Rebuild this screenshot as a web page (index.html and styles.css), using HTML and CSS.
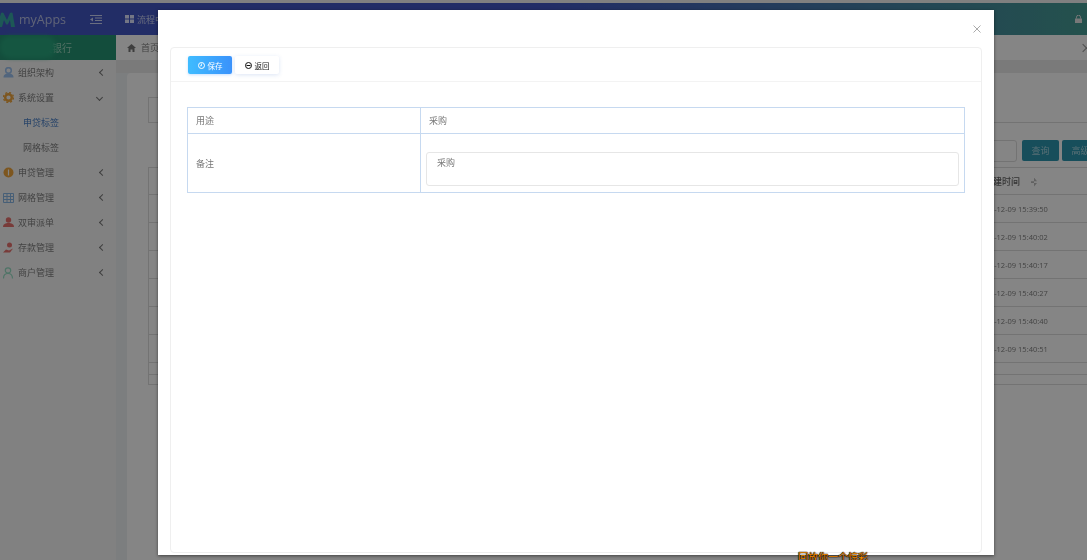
FILE: index.html
```html
<!DOCTYPE html>
<html lang="zh-CN">
<head>
  <meta charset="UTF-8" />
  <title>myApps</title>
  <link rel="stylesheet" href="styles.css">
</head>
<body>
  <div class="app">
    <!-- Top bar -->
    <header class="topbar">
      <div class="brand">
        <svg class="logo" width="16" height="15" viewBox="0 0 16 15"><path d="M-3 15 L1 1 Q2 0 3.500 1 L7 8 L10 1 Q11.500 0 12.500 1 L15 15 L11 15 L10 8 L8 12 Q7 13 6 12 L4 8 L2 15 Z" fill="#38aaa6"/></svg>
        <span class="brand-name">myApps</span>
        <svg class="menu-icon" width="12" height="9" viewBox="0 0 12 9"><path d="M0 .5h12M5 3h7M5 5.500h7M0 8.500h12" stroke="#ccd4f5" fill="none"/><path d="M3 2.500L0 4.500l3 2z" fill="#ccd4f5"/></svg>
      </div>
      <div class="topnav">
        <svg width="9" height="8" viewBox="0 0 9 8"><path d="M0 0h4v3.500H0zM5 0h4v3.500H5zM0 4.500h4V8H0zM5 4.500h4V8H5z" fill="#dfe5ff"/></svg>
        <span>流程中心</span>
      </div>
      <svg class="lock" width="7" height="8" viewBox="0 0 7 8"><path d="M1.500 3.500V2.200a2 2 0 0 1 4 0v1.300" stroke="#e6e6e6" fill="none"/><rect y="3.500" width="7" height="4.500" fill="#e6e6e6"/></svg>
    </header>

    <div class="main">
      <!-- Sidebar -->
      <aside class="sidebar">
        <div class="bank">
          <span class="bank-name">某某银行</span>
          <span class="bank-blur"></span>
        </div>
        <ul class="menu">
          <li class="menu-item">
            <svg width="11" height="11" viewBox="0 0 11 11"><circle cx="5.500" cy="3.500" r="2.800" fill="none" stroke="#86b4ee" stroke-width="1.500"/><path d="M.5 10.500c0-3 2-4 5-4s5 1 5 4z" fill="#86b4ee"/></svg>
            <span>组织架构</span><i class="chev"></i>
          </li>
          <li class="menu-item">
            <svg width="11" height="11" viewBox="0 0 11 11"><circle cx="5.500" cy="5.500" r="3.300" fill="none" stroke="#ee920f" stroke-width="2.400"/><circle cx="5.500" cy="5.500" r="5" fill="none" stroke="#ee920f" stroke-width="1.400" stroke-dasharray="2 1.930"/></svg>
            <span>系统设置</span><i class="chev open"></i>
          </li>
          <li class="sub-item active">申贷标签</li>
          <li class="sub-item">网格标签</li>
          <li class="menu-item">
            <svg width="11" height="11" viewBox="0 0 11 11"><circle cx="5.500" cy="5.500" r="5" fill="#ee920f"/><path d="M5.500 2.500v6" stroke="#fff" stroke-width="1.200"/></svg>
            <span>申贷管理</span><i class="chev"></i>
          </li>
          <li class="menu-item">
            <svg width="11" height="10" viewBox="0 0 11 10"><path d="M.5.500h10v9H.5zM.5 3.500h10M.5 6.500h10M4 .5v9M7.500.5v9" fill="none" stroke="#6ea6e0"/></svg>
            <span>网格管理</span><i class="chev"></i>
          </li>
          <li class="menu-item">
            <svg width="11" height="11" viewBox="0 0 11 11"><circle cx="5.500" cy="3" r="2.700" fill="#e4504c"/><path d="M0 10c0-3 2.500-4 5.500-4S11 7 11 10z" fill="#e4504c"/></svg>
            <span>双审派单</span><i class="chev"></i>
          </li>
          <li class="menu-item">
            <svg width="11" height="11" viewBox="0 0 11 11"><circle cx="6.500" cy="3" r="2.500" fill="#e4504c"/><path d="M0 10.500l3-3 3 1 4-2-3 4z" fill="#e4504c"/></svg>
            <span>存款管理</span><i class="chev"></i>
          </li>
          <li class="menu-item">
            <svg width="11" height="12" viewBox="0 0 11 12"><circle cx="5" cy="3.500" r="2.700" fill="none" stroke="#7fd8b8" stroke-width="1.200"/><path d="M.5 11.500c0-3.500 2-5 4.500-5s4.500 1.500 4.500 5" fill="none" stroke="#7fd8b8" stroke-width="1.200"/></svg>
            <span>商户管理</span><i class="chev"></i>
          </li>
        </ul>
      </aside>

      <!-- Main content behind the dialog -->
      <main class="content">
        <div class="tabs">
          <svg width="9" height="8" viewBox="0 0 9 8"><path d="M4.500 0L9 4H7.500v4H5.500V5.500h-2V8H1.500V4H0z" fill="#777"/></svg>
          <span>首页</span>
          <i class="tabs-next"></i>
        </div>
        <div class="band"></div>
        <div class="card">
          <div class="tab-line"><div class="tab-box"></div></div>
          <div class="search">
            <div class="search-input"></div>
            <button class="btn">查询</button>
            <button class="btn">高级</button>
          </div>
          <div class="grid">
            <div class="row head"><div class="time">创建时间<span class="sort"></span></div></div>
            <div class="row"><div class="time">2020-12-09 15:39:50</div></div>
            <div class="row"><div class="time">2020-12-09 15:40:02</div></div>
            <div class="row"><div class="time">2020-12-09 15:40:17</div></div>
            <div class="row"><div class="time">2020-12-09 15:40:27</div></div>
            <div class="row"><div class="time">2020-12-09 15:40:40</div></div>
            <div class="row"><div class="time">2020-12-09 15:40:51</div></div>
            <div class="row thin"></div>
            <div class="row last"></div>
          </div>
        </div>
      </main>
    </div>
  </div>

  <div class="overlay"></div>

  <!-- Dialog -->
  <div class="modal">
    <div class="modal-close">
      <svg width="8" height="8" viewBox="0 0 8 8"><path d="M.5.500l7 7M7.500.5l-7 7" stroke="#aaa" fill="none"/></svg>
    </div>
    <div class="panel">
      <div class="toolbar">
        <button class="tool save">
          <svg width="7" height="7" viewBox="0 0 7 7"><circle cx="3.500" cy="3.500" r="3" fill="none" stroke="#fff"/><path d="M3.500 1.500v2.300H2" fill="none" stroke="#fff" stroke-width=".8"/></svg>
          保存
        </button>
        <button class="tool back">
          <svg width="7" height="7" viewBox="0 0 7 7"><circle cx="3.500" cy="3.500" r="3" fill="none" stroke="#111"/><path d="M1.500 3.500h4" stroke="#111"/></svg>
          返回
        </button>
      </div>
      <table class="form-table">
        <tr class="row-use">
          <td class="label">用途</td>
          <td class="value">采购</td>
        </tr>
        <tr class="row-note">
          <td class="label">备注</td>
          <td class="value"><div class="textarea">采购</div></td>
        </tr>
      </table>
    </div>
  </div>

  <div class="float-tip">回放你一个惊彩</div>
</body>
</html>
```
FILE: styles.css
```css
* {
  box-sizing: border-box;
  margin: 0;
  padding: 0;
}

html, body {
  height: 560px;
  overflow: hidden;
}

body {
  position: relative;
  font-family: "Noto Sans CJK SC", "Open Sans", sans-serif;
  font-size: 9px;
  color: #808080;
  background: #f5f5f5;
}

.app {
  height: 560px;
  padding-top: 3px;
  display: flex;
  flex-direction: column;
  filter: blur(0.5px);
}

/* Top bar */
.topbar {
  height: 32px;
  display: flex;
  align-items: center;
  color: #c8d0f0;
  background: linear-gradient(90deg, #4256c4 0, #4256c4 50%, #459c94 100%);
}

.brand {
  width: 116px;
  display: flex;
  align-items: center;
}

.brand-name {
  margin-left: 3px;
  font-family: "Open Sans", sans-serif;
  font-size: 12.5px;
  color: #b8c0e4;
}

.menu-icon {
  margin-left: 24px;
}

.topnav {
  margin-left: 9px;
  display: flex;
  align-items: center;
  gap: 3px;
}

.lock {
  margin-left: auto;
  margin-right: 5px;
}

.main {
  flex: 1;
  display: flex;
  min-height: 0;
}

/* Sidebar */
.sidebar {
  width: 116px;
  flex-shrink: 0;
  background: #f7f7f7;
}

.bank {
  position: relative;
  height: 25px;
  line-height: 25px;
  background: #259473;
  color: #a0d8c0;
  font-size: 10px;
  padding-left: 32px;
}

.bank-blur {
  position: absolute;
  left: 0;
  top: 1px;
  width: 56px;
  height: 22px;
  border-radius: 10px;
  background: #2aa67e;
  filter: blur(2px);
}

.menu {
  list-style: none;
}

.menu-item {
  height: 25px;
  display: flex;
  align-items: center;
  padding-left: 3px;
}

.menu-item svg {
  opacity: 0.8;
}

.menu-item span {
  margin-left: 4px;
}

.chev {
  margin-left: auto;
  margin-right: 11px;
  width: 5px;
  height: 5px;
  border-left: 1px solid #777;
  border-bottom: 1px solid #777;
  transform: rotate(45deg);
}

.chev.open {
  margin-right: 14px;
  transform: rotate(-45deg);
}

.sub-item {
  height: 25px;
  line-height: 25px;
  padding-left: 23px;
}

.sub-item.active {
  color: #4a80c8;
}

/* Content behind the dialog */
.content {
  flex: 1;
  min-width: 0;
  background: #eef1f4;
  overflow: hidden;
}

.tabs {
  height: 25px;
  padding-left: 11px;
  display: flex;
  align-items: center;
  gap: 5px;
  background: #fff;
}

.tabs-next {
  margin-left: auto;
  margin-right: 1px;
  width: 6px;
  height: 6px;
  border-right: 1px solid #999;
  border-top: 1px solid #999;
  transform: rotate(45deg);
}

.band {
  height: 13px;
  background: #eaeaea;
}

.card {
  margin-left: 11px;
  margin-right: -40px;
  height: 500px;
  padding-top: 24px;
  background: #fff;
  border-radius: 4px;
}

.tab-line {
  margin-left: 21px;
  height: 26px;
  border-bottom: 1px solid #ddd;
}

.tab-box {
  width: 40px;
  height: 26px;
  border: 1px solid #ddd;
  border-bottom: 0;
}

.search {
  margin-top: 17px;
  padding-right: 28px;
  display: flex;
  justify-content: flex-end;
  gap: 3px;
}

.search-input {
  width: 100px;
  height: 22px;
  margin-right: 2px;
  border: 1px solid #ddd;
  border-radius: 3px;
}

.btn {
  width: 37px;
  height: 21px;
  border: none;
  border-radius: 2px;
  background: #2c96ae;
  color: #a8d4e0;
  font: inherit;
}

.grid {
  margin-top: 5px;
  margin-left: 21px;
  border-left: 1px solid #ddd;
}

.row {
  height: 28px;
  border-bottom: 1px solid #ddd;
  display: flex;
  justify-content: flex-end;
  align-items: center;
  font-family: "Open Sans", "Noto Sans CJK SC", sans-serif;
  font-size: 7.5px;
}

.row.head {
  border-top: 1px solid #ddd;
  font-family: "Noto Sans CJK SC", sans-serif;
  font-size: 9px;
  font-weight: 500;
  color: #666;
}

.row.thin {
  height: 12px;
}

.row.last {
  height: 10px;
}

.time {
  width: 150px;
}

.row.head .time {
  padding-left: 7px;
}

.sort {
  display: inline-block;
  margin-left: 11px;
  width: 6px;
  height: 9px;
  vertical-align: middle;
  background: #bbb;
  clip-path: polygon(50% 0, 100% 40%, 0 40%, 0 60%, 100% 60%, 50% 100%);
}

/* Dialog */
.overlay {
  position: absolute;
  inset: 0;
  background: rgba(0, 0, 0, 0.48);
}

.modal {
  position: absolute;
  left: 158px;
  top: 10px;
  width: 836px;
  height: 545px;
  padding: 37px 12px 0;
  background: #fff;
  box-shadow: 0 1px 3px rgba(0, 0, 0, 0.5);
  filter: blur(0.35px);
}

.modal-close {
  position: absolute;
  top: 15px;
  right: 13px;
  line-height: 0;
}

.panel {
  height: 506px;
  border: 1px solid #efefef;
  border-radius: 4px;
}

.toolbar {
  height: 34px;
  padding: 8px 0 0 17px;
  display: flex;
  gap: 3px;
  align-items: flex-start;
  border-bottom: 1px solid #f3f3f3;
}

.tool {
  width: 44px;
  height: 18px;
  display: flex;
  align-items: center;
  justify-content: center;
  gap: 3px;
  border: none;
  border-radius: 2px;
  font-family: inherit;
  font-size: 7.5px;
}

.tool.save {
  background: linear-gradient(90deg, #3fbcff, #3a92fb);
  color: #fff;
  box-shadow: 0 1px 3px rgba(58, 146, 251, 0.3);
}

.tool.back {
  background: #fff;
  color: #111;
  box-shadow: 0 1px 4px rgba(60, 110, 200, 0.18);
}

.form-table {
  margin: 25px 0 0 16px;
  width: 778px;
  border-collapse: collapse;
  table-layout: fixed;
  color: #777;
}

.form-table td {
  border: 1px solid #c6d9f0;
  vertical-align: middle;
}

.label {
  width: 233px;
  padding-left: 8px;
}

.value {
  padding-left: 8px;
}

.row-use td {
  height: 26px;
}

.row-note td {
  height: 59px;
}

.row-note .value {
  padding: 18px 5px 6px 5px;
}

.textarea {
  height: 34px;
  padding: 2px 10px;
  border: 1px solid #e6e6e6;
  border-radius: 3px;
  line-height: 16px;
}

.float-tip {
  position: absolute;
  left: 798px;
  top: 550px;
  font-size: 10px;
  line-height: 13px;
  color: #f08a00;
  text-shadow: 0 0 1px #000, 0 0 1px #000, 0 0 1px #000;
}
```
